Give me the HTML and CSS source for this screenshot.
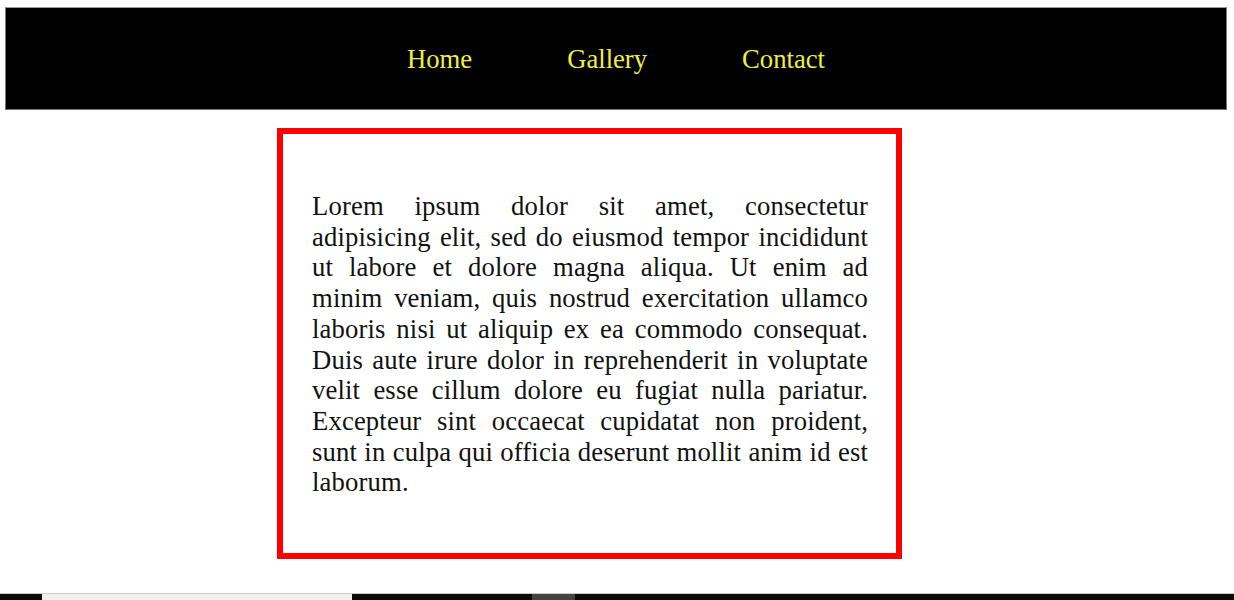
FILE: index.html
```html
<!DOCTYPE html>
<html>
<head>
<meta charset="utf-8">
<link rel="stylesheet" href="styles.css">
</head>
<body>
<header class="topbar">
  <nav class="nav">
    <a class="nav-link" href="#">Home</a>
    <a class="nav-link" href="#">Gallery</a>
    <a class="nav-link" href="#">Contact</a>
  </nav>
</header>
<main class="content">
  <div class="box">
    <p class="text">Lorem ipsum dolor sit amet, consectetur adipisicing elit, sed do eiusmod tempor incididunt ut labore et dolore magna aliqua. Ut enim ad minim veniam, quis nostrud exercitation ullamco laboris nisi ut aliquip ex ea commodo consequat. Duis aute irure dolor in reprehenderit in voluptate velit esse cillum dolore eu fugiat nulla pariatur. Excepteur sint occaecat cupidatat non proident, sunt in culpa qui officia deserunt mollit anim id est laborum.</p>
  </div>
</main>
<footer class="strip">
  <div class="seg seg-dark1"></div>
  <div class="seg seg-light"></div>
  <div class="seg seg-dark2"></div>
  <div class="seg seg-grey"></div>
  <div class="seg seg-dark3"></div>
</footer>
</body>
</html>
```
FILE: styles.css
```css
html, body {
  margin: 0;
  padding: 0;
  background: #fff;
}
body {
  font-family: "Liberation Serif", "Times New Roman", serif;
  padding: 7px 7px 0 5px;
  overflow: hidden;
  height: 593px;
  display: flex;
  flex-direction: column;
}
.topbar {
  background: #000;
  height: 103px;
  border: 1px solid #777;
  border-top-color: #999;
  display: flex;
  align-items: center;
  justify-content: center;
  box-sizing: border-box;
}
.nav {
  display: flex;
  gap: 95px;
  padding-top: 2px;
}
.nav-link {
  color: #f0f03c;
  text-decoration: none;
  font-size: 26.67px;
}
.content {
  flex: 1;
  padding-top: 18px;
  padding-left: 272px;
}
.box {
  height: 419px;
  border: 6px solid #f00;
  padding: 0 28px 0 29px;
  box-sizing: content-box;
  width: 556px;
}
.text {
  margin: 57px 0 0;
  font-size: 26.67px;
  line-height: 30.7px;
  letter-spacing: 0.15px;
  text-align: justify;
  color: #111;
}
.strip {
  height: 6px;
  margin: 0 -7px 0 -5px;
  display: flex;
  border-top: 1px solid #ccc;
}
.seg { height: 100%; }
.seg-dark1 { width: 42px; background: #0a0a0a; }
.seg-light { width: 310px; background: #f0f0f0; }
.seg-dark2 { width: 180px; background: #0a0a0a; }
.seg-grey { width: 43px; background: #444; }
.seg-dark3 { flex: 1; background: #0a0a0a; }
```
